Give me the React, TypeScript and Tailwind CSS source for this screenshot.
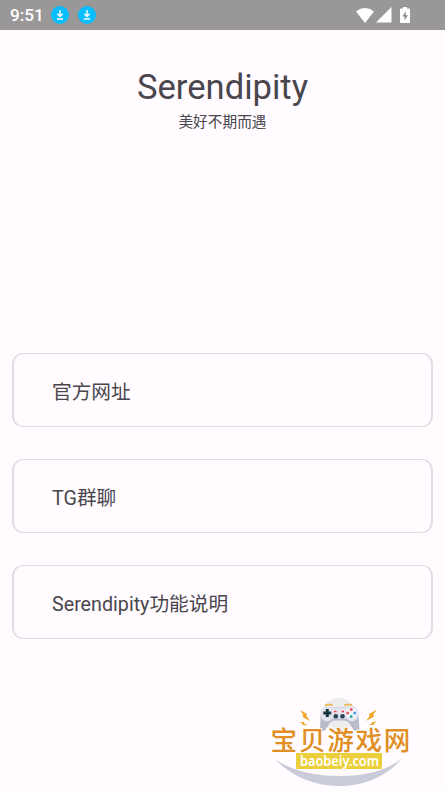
import React from 'react';

const links = ['官方网址', 'TG群聊', 'Serendipity功能说明'];

const DownloadBadge = () => (
  <svg viewBox="0 0 18 18" className="h-[18px] w-[18px]">
    <circle cx="9" cy="9" r="9" fill="#08bdfd" />
    <path d="M9 4v6M6.3 7.8 9 10.5l2.7-2.7M5.9 13h6.2" fill="none" stroke="#fff" strokeWidth="1.4" />
  </svg>
);

const StatusBar = () => (
  <header className="flex h-[30px] items-center bg-[#999797] pl-2.5 pr-[33px] text-white">
    <span className="w-[41px] text-[17.2px] font-medium leading-[30px]">9:51</span>
    <div className="flex gap-[9px]">
      <DownloadBadge />
      <DownloadBadge />
    </div>
    <div className="ml-auto flex items-center">
      <svg viewBox="0 0 18 15" className="h-[15px] w-[18px]">
        <path d="M0 3.5Q9-3.3 18 3.5L9 15Z" fill="#fff" />
      </svg>
      <svg viewBox="0 0 16 16" className="ml-0.5 h-4 w-4">
        <path d="M15.5 0v15.5H0Z" fill="#fff" />
      </svg>
      <svg viewBox="0 0 10 16" className="ml-2 mr-[2px] h-4 w-2.5">
        <path d="M3 0h4v1.5h2.2q.8 0 .8.8v12.9q0 .8-.8.8H.8q-.8 0-.8-.8V2.3q0-.8.8-.8H3Z" fill="#fff" />
        <path d="M6 4.2 2.3 9.5h2.2v4L8 8.3H5.7Z" fill="#8e8c8c" />
      </svg>
    </div>
  </header>
);

const Gamepad = () => (
  <g>
    <path d="M65 15.6q1-1 2.5-1h3q1.5 0 2 1M84.5 15.6q1-1 2.5-1h3q1.5 0 2 1" fill="none" stroke="#edb84d" strokeWidth="1.6" />
    <path d="M66.500 17h26q5 1 5.800 7l1.200 15q-2 3-5.500 1.500l-4.500-7q-2-3-5-3H74.500q-3 0-5 3l-4.500 7q-4 1.500-5-1.500L60.700 24q.8-6 5.800-7Z" fill="#b9bccb" />
    <path d="M66.500 16h5.500l1.500 1.500h12L87 16h5.500q5.500.8 6 7.200 0 6.800-5.500 8-4 .5-6.500-2.700h-14q-2.500 3.200-6.500 2.700-5.500-1.200-5.500-8 .5-6.400 6-7.200Z" fill="#e3e4ed" />
    <path d="M67.300 19v8M63.300 23h8" stroke="#173740" strokeWidth="3" />
    <circle cx="91.2" cy="23" r="5.5" fill="#f5f6fc" />
    <circle cx="91.2" cy="19.5" r="1.5" fill="#e9545f" />
    <circle cx="87.7" cy="23" r="1.5" fill="#e9545f" />
    <circle cx="94.7" cy="23" r="1.5" fill="#4c9ed9" />
    <circle cx="91.2" cy="26.5" r="1.5" fill="#2ba9a5" />
    <path d="M74 21.500h2.500M81.500 21.500H84" stroke="#e64155" strokeWidth="1.3" />
    <circle cx="75.8" cy="26.3" r="2.3" fill="#294354" />
    <circle cx="82.5" cy="26.3" r="2.3" fill="#294354" />
  </g>
);

const Watermark = () => (
  <svg viewBox="0 0 160 101" className="absolute bottom-0 left-[260px] h-[101px] w-[160px]">
    <circle cx="79" cy="25" r="17" fill="#ededf0" />
    <path d="M15.500 69.500Q40 86 80 86t62-17.500Q118 96 78 96 40 95 15.500 69.500Z" fill="#c9cbd8" />
    <Gamepad />

    <text x="10.6" y="59.6" fontSize="26.6" letterSpacing="1.7" fill="#e18e25" stroke="#fff" strokeWidth="1.8" strokeLinejoin="round" paintOrder="stroke" className="font-['Noto_Sans_CJK_SC',sans-serif] font-medium">
      宝贝游戏网
    </text>
    <rect x="36" y="63" width="86" height="16" fill="#ebcf3d" />
    <text x="40" y="75.5" textLength="79" lengthAdjust="spacingAndGlyphs" fontSize="14.5" fill="#fff" className="font-['Noto_Sans',sans-serif] font-semibold">
      baobeiy.com
    </text>

    {/* sparks */}
    <g fill="#f0a52c">
      <path d="m40 20 7 4-.5 2 3.500 5-7.500-4 .8-2ZM39.500 32.200l4.500-.2v1.200l3.500 2.300-5-.5v-1.300Z" />
      <path d="m117 19.500-8 4.500.5 2-3.500 5 8-4.500-.7-2ZM116.500 31.500l-4.500.5v1.200l-3.500 2 5.500-.5v-1.200Z" />
    </g>
  </svg>
);

export default function App() {
  return (
    <div className="relative flex h-[791px] w-[445px] flex-col overflow-hidden bg-[#fffbff] font-[Roboto,'Noto_Sans_CJK_SC',sans-serif] text-[#49464d]">
      <StatusBar />
      <div className="flex h-[323px] flex-col items-center pt-[34px]">
        <h1 className="text-[34.6px] leading-[46px]">Serendipity</h1>
        <p className="pt-px text-[14.7px] leading-[22px]">美好不期而遇</p>
      </div>
      <main className="flex flex-col gap-8 px-3">
        {links.map((label) => (
          <button
            key={label}
            className="flex h-[74px] items-center rounded-[11px] border-x-2 border-y border-[#e0dee2] pl-[38px] pt-[5px] text-left text-[19.7px]"
          >
            {label}
          </button>
        ))}
      </main>
      <Watermark />
    </div>
  );
}
